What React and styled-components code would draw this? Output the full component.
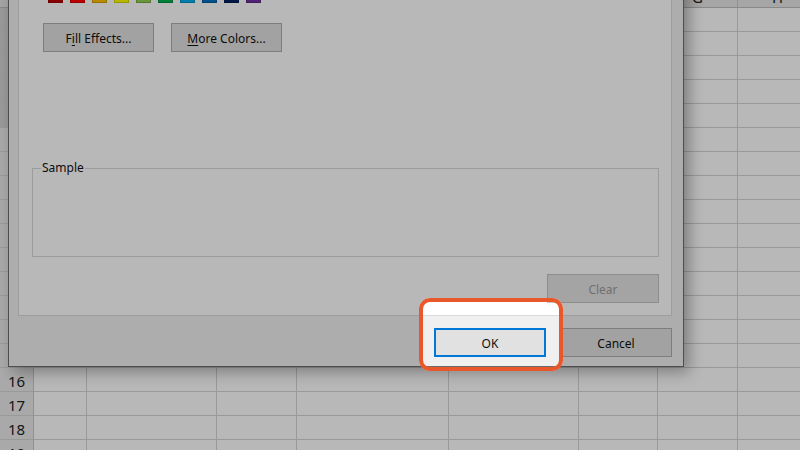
import React from 'react'
import styled, { createGlobalStyle } from 'styled-components'

const COLUMNS = ['A', 'B', 'C', 'D', 'E', 'F', 'G', 'H']
const ROW_COUNT = 19
const SELECTED_ROWS = 5
const SWATCHES = [
  '#c00000',
  '#ff0000',
  '#ffc000',
  '#ffff00',
  '#92d050',
  '#00b050',
  '#00b0f0',
  '#0070c0',
  '#002060',
  '#7030a0'
]

const App = () => {
  const rows = Array.from({ length: ROW_COUNT }, (_, i) => i + 1)
  return (
    <Screen>
      <GlobalStyle />
      <Sheet>
        <ColumnHeader $corner />
        {COLUMNS.map(letter => (
          <ColumnHeader key={letter}>{letter}</ColumnHeader>
        ))}
        {rows.map(row => (
          <React.Fragment key={row}>
            <RowHeader $selected={row <= SELECTED_ROWS}>{row}</RowHeader>
            {COLUMNS.map(letter => (
              <Cell key={letter} />
            ))}
          </React.Fragment>
        ))}
      </Sheet>

      <Dialog>
        <Panel>
          <SwatchRow>
            {SWATCHES.map(color => (
              <Swatch key={color} $color={color} />
            ))}
          </SwatchRow>
          <ButtonRow>
            <Button $width={111}>
              F<Key>i</Key>ll Effects...
            </Button>
            <Button $width={111}>
              <Key>M</Key>ore Colors...
            </Button>
          </ButtonRow>
          <GroupBox>
            <GroupLabel>Sample</GroupLabel>
          </GroupBox>
          <ClearRow>
            <Button disabled>Clear</Button>
          </ClearRow>
        </Panel>
        <Footer>
          <Spot>
            <Button $primary>OK</Button>
            <Highlight />
          </Spot>
          <Button>Cancel</Button>
        </Footer>
      </Dialog>
    </Screen>
  )
}

const GlobalStyle = createGlobalStyle`
  html, body {
    margin: 0;
    padding: 0;
    overflow: hidden;
    background: #fff;
  }
  body {
    font-family: "Noto Sans", "DejaVu Sans", sans-serif;
  }
`

const Screen = styled.div`
  position: relative;
  width: 800px;
  height: 450px;
  overflow: hidden;
  background: #fff;
`

const Sheet = styled.div`
  display: grid;
  grid-template-columns: 34px 53px 130px 80px 152px 130px 79px 80px 80px;
  grid-template-rows: 26px;
  grid-auto-rows: 24px;
  margin-top: -18px;
  font-family: "Noto Sans", sans-serif;
  font-size: 15px;
  color: #222;
`

const Cell = styled.div`
  box-sizing: border-box;
  border-right: 1px solid #d4d4d4;
  border-bottom: 1px solid #d4d4d4;
  background: #fff;
`

const ColumnHeader = styled.div`
  box-sizing: border-box;
  display: flex;
  align-items: flex-end;
  justify-content: center;
  padding-bottom: 2px;
  line-height: 16px;
  background: #e6e6e6;
  border-right: 1px solid #c8c8c8;
  border-bottom: 1px solid #bdbdbd;
`

const RowHeader = styled.div`
  box-sizing: border-box;
  display: flex;
  align-items: center;
  justify-content: center;
  padding-top: 2px;
  line-height: 24px;
  background: ${p => (p.$selected ? '#d6d6d6' : '#ebebeb')};
  border-right: 1px solid #c8c8c8;
  border-bottom: 1px solid #d4d4d4;
`

const Dialog = styled.div`
  position: absolute;
  left: 8px;
  top: -40px;
  width: 676px;
  box-sizing: border-box;
  display: flex;
  flex-direction: column;
  padding: 0 11px 0 9px;
  background: #f0f0f0;
  border: 1px solid #6c6c6c;
  box-shadow: 5px 5px 14px rgba(0, 0, 0, 0.32);
  font-family: "Noto Sans", sans-serif;
  font-size: 12px;
  color: #000;
`

const Panel = styled.div`
  display: flex;
  flex-direction: column;
  margin-top: 9px;
  padding: 0 12px 12px 13px;
  background: #fff;
  border: 1px solid #dadada;
`

const SwatchRow = styled.div`
  display: flex;
  gap: 7px;
  margin: 17px 0 0 16px;
`

const Swatch = styled.span`
  width: 15px;
  height: 15px;
  box-sizing: border-box;
  background: ${p => p.$color};
  border: 1px solid rgba(0, 0, 0, 0.18);
`

const ButtonRow = styled.div`
  display: flex;
  gap: 17px;
  margin: 20px 0 0 11px;
`

const Button = styled.button`
  width: ${p => p.$width || 112}px;
  height: 29px;
  box-sizing: border-box;
  padding: 2px 0 0;
  font: inherit;
  font-size: 12px;
  color: ${p => (p.disabled ? '#9c9c9c' : '#111')};
  background: ${p => (p.disabled ? '#e4e4e4' : '#e1e1e1')};
  border: ${p => (p.$primary ? '2px solid #0078d7' : '1px solid #adadad')};
  border-color: ${p => (p.disabled ? '#c4c4c4' : undefined)};
`

const Key = styled.span`
  text-decoration: underline;
  text-underline-offset: 2px;
`

const GroupBox = styled.div`
  position: relative;
  height: 89px;
  box-sizing: border-box;
  margin-top: 116px;
  border: 1px solid #d9d9d9;
`

const GroupLabel = styled.span`
  position: absolute;
  top: -9px;
  left: 8px;
  padding: 0 1px;
  line-height: 16px;
  background: #fff;
  color: #111;
`

const ClearRow = styled.div`
  display: flex;
  justify-content: flex-end;
  margin-top: 17px;
`

const Footer = styled.div`
  display: flex;
  justify-content: flex-end;
  gap: 14px;
  padding: 12px 0 9px;
`

const Spot = styled.div`
  position: relative;
  display: flex;
`

const Highlight = styled.span`
  position: absolute;
  top: -30px;
  left: -15px;
  right: -17px;
  bottom: -14px;
  z-index: 5;
  border: 4px solid #e9582b;
  border-radius: 11px;
  box-shadow: 0 0 0 1600px rgba(0, 0, 0, 0.28);
  pointer-events: none;
`

export default App
